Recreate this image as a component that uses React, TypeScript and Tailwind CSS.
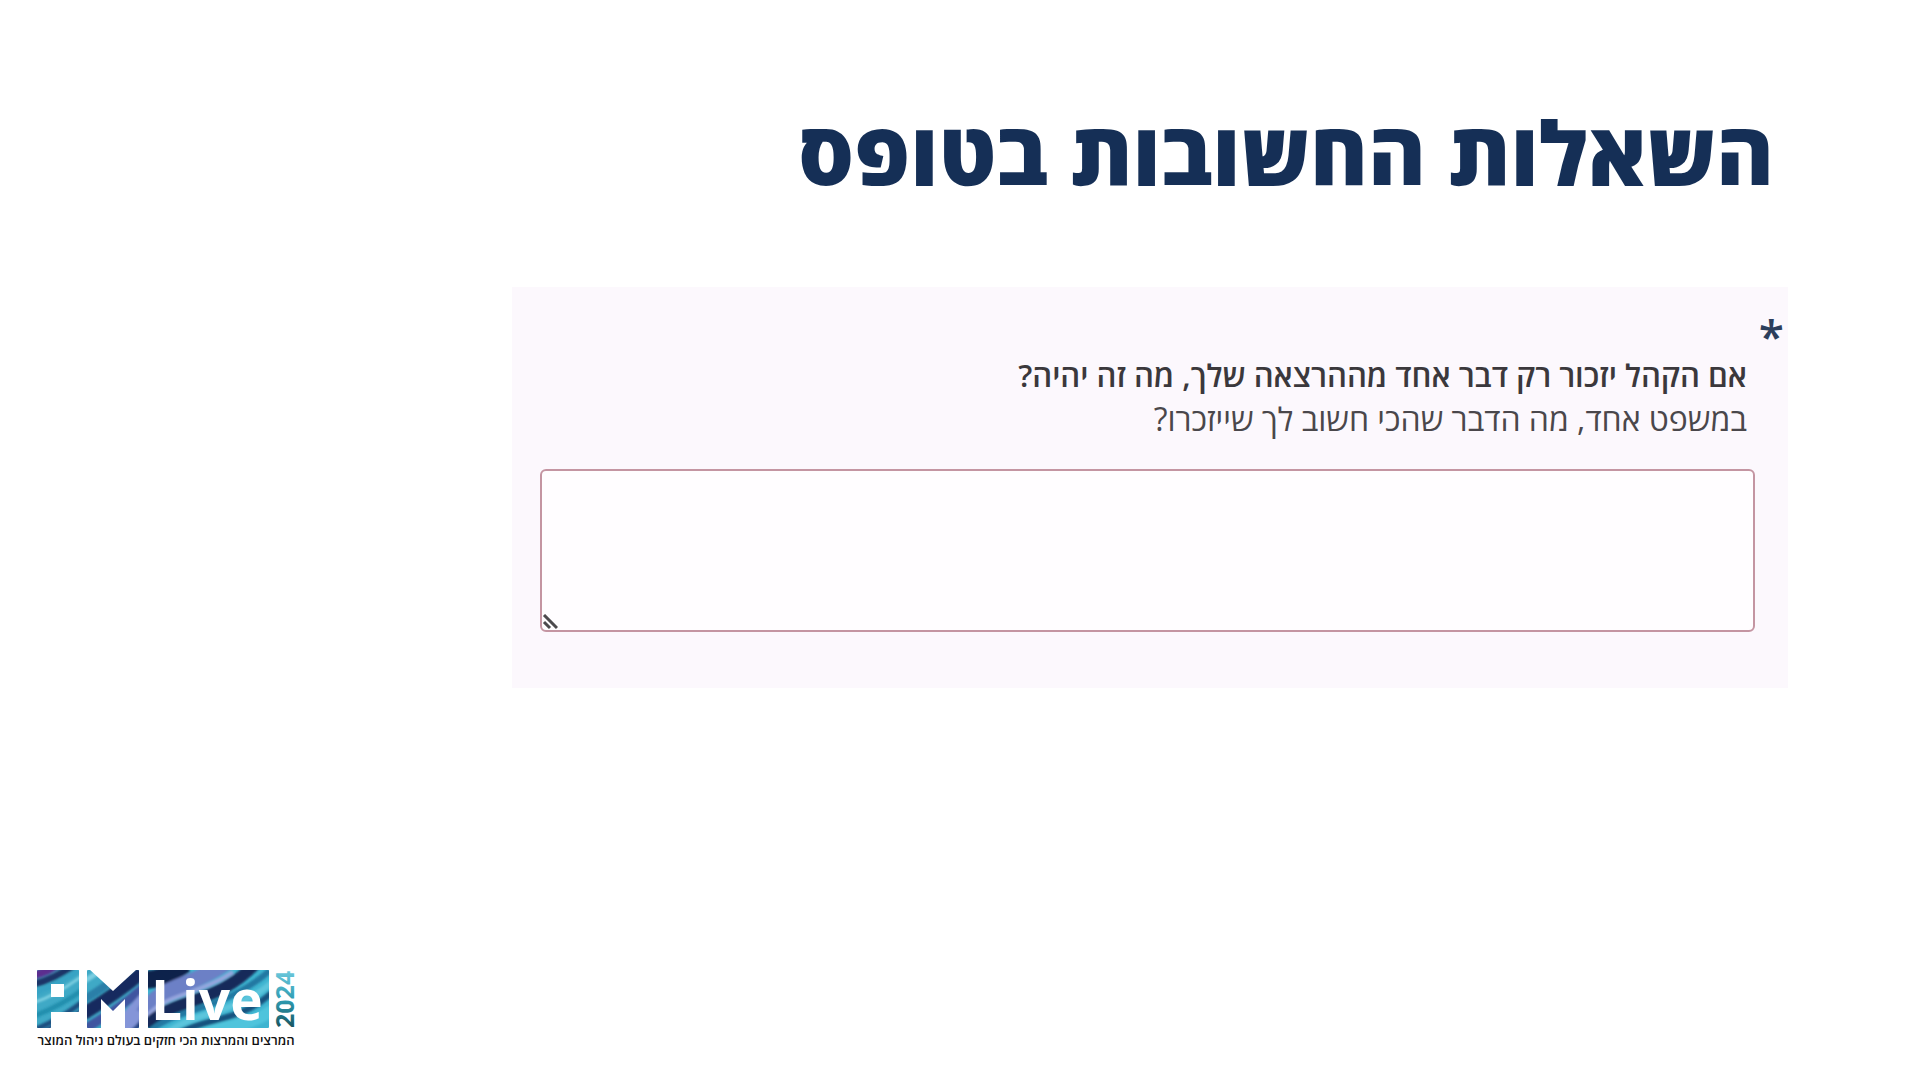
function Logo() {
  return (
    <svg viewBox="0 -14 272 100" className="block w-[272px] h-[100px]" role="img" aria-label="PM Live 2024">
      <defs>
        <linearGradient id="year" x1="0" y1="0" x2="1" y2="0">
          <stop offset="0" stopColor="#17545f" />
          <stop offset="0.5" stopColor="#2f9db3" />
          <stop offset="1" stopColor="#6cc8dc" />
        </linearGradient>
        <filter id="soft" x="-5%" y="-20%" width="110%" height="140%">
          <feGaussianBlur stdDeviation="1.3" />
        </filter>
        <clipPath id="tiles">
          <rect x="0" y="0" width="42" height="42" rx="1" />
          <rect x="0" y="0" width="14" height="58" rx="1" />
          <rect x="50" y="0" width="52" height="58" rx="1" />
          <rect x="111" y="0" width="121" height="58" rx="1" />
        </clipPath>
      </defs>
      <g clipPath="url(#tiles)" fill="none">
        <rect width="107" height="58" fill="#3fa9c6" />
        <rect x="107" width="125" height="58" fill="#3fb4d0" />
        <g filter="url(#soft)">
          <path d="M-8 6C6 4 14 -1 24 -8" stroke="#5b2f8f" strokeWidth="8" />
          <path d="M-8 15C10 12 24 4 42 -8" stroke="#1d3468" strokeWidth="7" />
          <path d="M-8 25C12 18 28 10 48 -4" stroke="#37a3c4" strokeWidth="6" />
          <path d="M-8 34C14 28 28 18 48 4" stroke="#7ed0e2" strokeWidth="3" />
          <path d="M-8 48C14 40 30 32 48 18" stroke="#238fae" strokeWidth="5" />
          <path d="M-8 62C14 54 30 44 48 30" stroke="#1a4f80" strokeWidth="5" />
          <path d="M2 66C20 56 34 50 48 40" stroke="#243c78" strokeWidth="6" />
          <path d="M46 12C58 4 66 0 74 -8" stroke="#7ccfe2" strokeWidth="5" />
          <path d="M46 30C60 22 74 12 86 2" stroke="#2b7fa8" strokeWidth="8" />
          <path d="M46 44C66 32 84 20 106 2" stroke="#162b5e" strokeWidth="13" />
          <path d="M46 60C66 48 86 36 106 18" stroke="#3f55a0" strokeWidth="9" />
          <path d="M74 66C86 56 96 46 110 30" stroke="#8495d8" strokeWidth="18" />
          <path d="M92 64C98 60 102 56 106 50" stroke="#2d4c8e" strokeWidth="5" />
          <path d="M106 10C122 10 134 4 148 -6" stroke="#10224c" strokeWidth="18" />
          <path d="M106 44C124 14 150 20 190 -8" stroke="#6c80c6" strokeWidth="16" />
          <path d="M110 46C128 24 160 26 196 2" stroke="#96a5de" strokeWidth="4" />
          <path d="M106 60C132 26 178 38 220 -8" stroke="#14295a" strokeWidth="12" />
          <path d="M112 62C140 36 184 44 236 -2" stroke="#2378a2" strokeWidth="6" />
          <path d="M128 64C160 40 194 46 236 12" stroke="#5cc5dc" strokeWidth="6" />
          <path d="M140 64C172 46 200 54 236 22" stroke="#17527f" strokeWidth="6" />
          <path d="M160 66C190 54 210 58 236 40" stroke="#4fc4dc" strokeWidth="12" />
        </g>
      </g>
      <rect x="14" y="14" width="13" height="13" fill="#fff" />
      <path d="M52 -1L76 21L100 -1ZM64 59V29L76 41L88 29V59Z" fill="#fff" />
      <text x="114" y="50" fontSize="55" fill="#fff" className="font-['Open_Sans'] font-bold">
        Live
      </text>
      <text x="0" y="0" transform="translate(257 58) rotate(-90)" fontSize="25" fill="url(#year)" className="font-['Open_Sans'] font-bold">
        2024
      </text>
      <text x="129" y="75" fontSize="13" textAnchor="middle" direction="rtl" fill="#111" className="font-['Open_Sans'] font-semibold">
        המרצים והמרצות הכי חזקים בעולם ניהול המוצר
      </text>
    </svg>
  );
}

function ResizeGrip() {
  return (
    <svg viewBox="0 0 16 16" className="pointer-events-none absolute bottom-0.5 left-0.5 size-4" aria-hidden="true">
      <path d="M2 1L15 14M2 8L8 14" stroke="#4c4a4d" strokeWidth="3" fill="none" />
    </svg>
  );
}

function QuestionCard() {
  return (
    <section className="relative ms-[132px] me-[512px] bg-[#fcf8fd] ps-[33px] pe-7 pt-[66px] pb-14 text-[32px] leading-[44px] text-[#3b383c]">
      <span className="absolute top-[18px] right-1 text-[46px] leading-[60px] font-semibold text-[#2c3f5c]" aria-hidden="true">
        *
      </span>
      <label htmlFor="takeaway" className="block px-2">
        <span className="block text-[31px] font-semibold">אם הקהל יזכור רק דבר אחד מההרצאה שלך, מה זה יהיה?</span>
        <span className="block text-[#4a474b]">במשפט אחד, מה הדבר שהכי חשוב לך שייזכרו?</span>
      </label>
      <div className="relative mt-7">
        <textarea
          id="takeaway"
          required
          className="block h-[163px] w-full resize-none rounded-md border-2 border-[#c495a2] bg-[#fffdff] p-3 outline-none"
        />
        <ResizeGrip />
      </div>
    </section>
  );
}

export default function App() {
  return (
    <main dir="rtl" className="flex min-h-screen flex-col bg-white font-['Open_Sans','Noto_Sans',sans-serif]">
      <h1 className="ps-[146px] pt-24 text-[88px] leading-[112px] font-extrabold text-[#152f56]">
        השאלות החשובות בטופס
      </h1>
      <div className="mt-[79px]">
        <QuestionCard />
      </div>
      <footer dir="ltr" className="mt-auto ps-[37px] pb-6">
        <Logo />
      </footer>
    </main>
  );
}
